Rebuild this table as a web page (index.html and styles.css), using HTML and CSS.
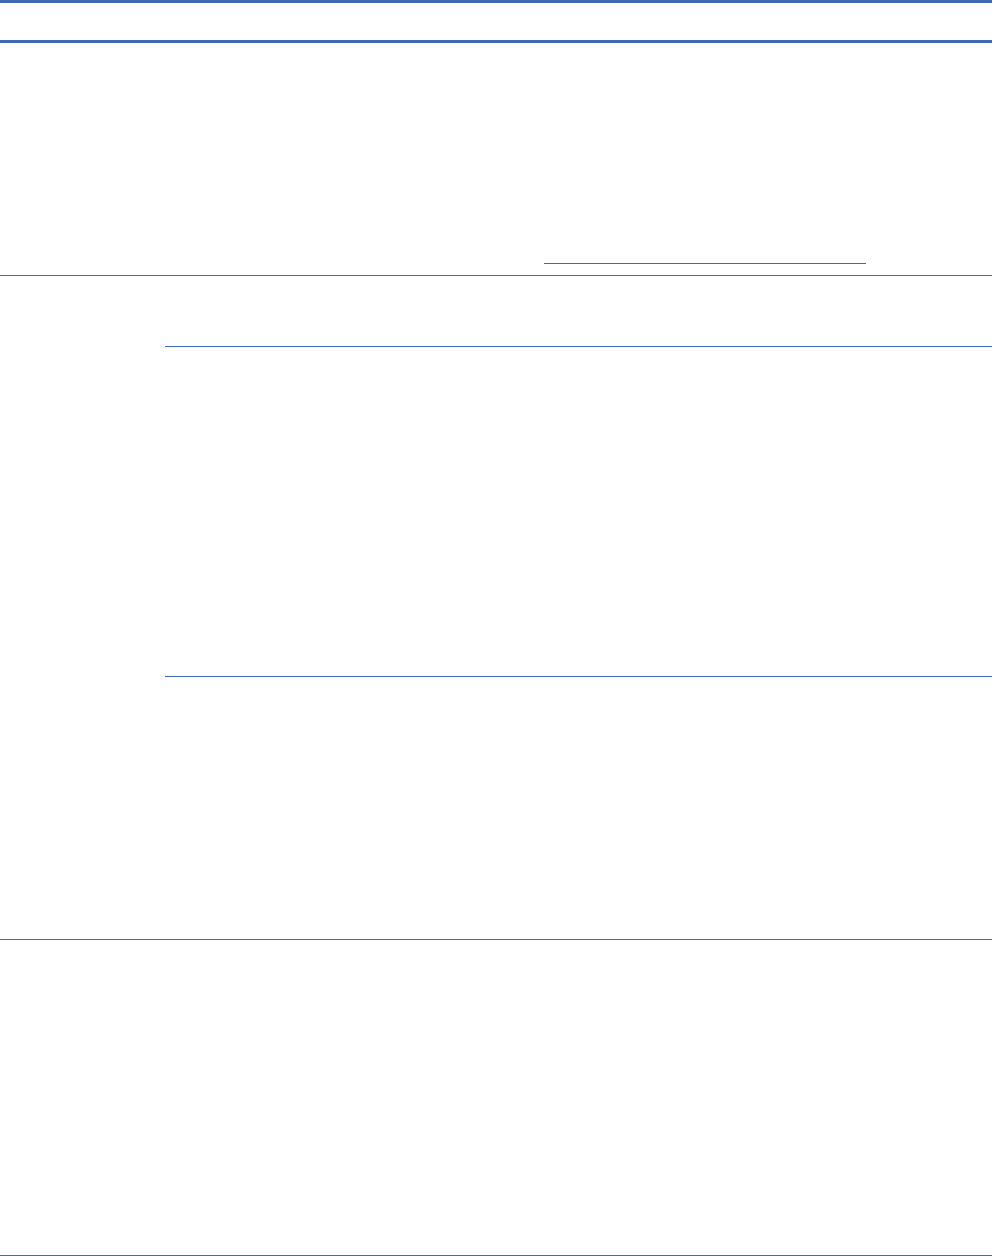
FILE: index.html
```html
<!DOCTYPE html>
<html lang="en">
<head>
  <meta charset="UTF-8">
  <meta name="viewport" content="width=device-width, initial-scale=1.0">
  <title>Spec table</title>
  <link rel="stylesheet" href="styles.css">
</head>
<body>
  <div class="spec-table">
    <div class="table-head"></div>

    <div class="table-row row-first">
      <div class="row-label"></div>
      <div class="row-body">
        <div class="link-line">
          <span class="link-part part-a"></span><span class="link-part part-b"></span>
        </div>
      </div>
    </div>

    <div class="table-row row-second">
      <div class="row-label"></div>
      <div class="row-body">
        <div class="sub-row sub-top"></div>
        <div class="sub-row sub-mid"></div>
        <div class="sub-row sub-bottom"></div>
      </div>
    </div>

    <div class="table-row row-third">
      <div class="row-label"></div>
      <div class="row-body"></div>
    </div>
  </div>
</body>
</html>
```

FILE: styles.css
```css
/* Page */
body {
  margin: 0;
  background: #fff;
  font-family: 'Liberation Sans', Arial, sans-serif;
  color: #222;
}

.spec-table {
  width: 992px;
}

/* Table head */
.table-head {
  height: 37px;
  border-top: 3px solid #3e6ab3;
  border-bottom: 3px solid #3e6ab3;
}

/* Rows */
.table-row {
  display: grid;
  grid-template-columns: 165px 1fr;
  border-bottom: 1px solid #466aa8;
}

.row-first {
  height: 232px;
}

.row-third {
  height: 315px;
}

.row-body {
  display: flex;
  flex-direction: column;
}

/* Link underline */
.row-first .row-body {
  justify-content: flex-end;
}

.link-line {
  display: flex;
  padding-left: 379px;
  margin-bottom: 11px;
}

.link-part {
  display: block;
  height: 1px;
  background: #3f68ad;
}

.part-a {
  width: 248px;
}

.part-b {
  width: 74px;
}

/* Sub rows */
.sub-row {
  border-bottom: 1px solid #3c6cc2;
}

.sub-top {
  height: 70px;
}

.sub-mid {
  height: 329px;
}

.sub-bottom {
  height: 262px;
  border-bottom: none;
}
```
